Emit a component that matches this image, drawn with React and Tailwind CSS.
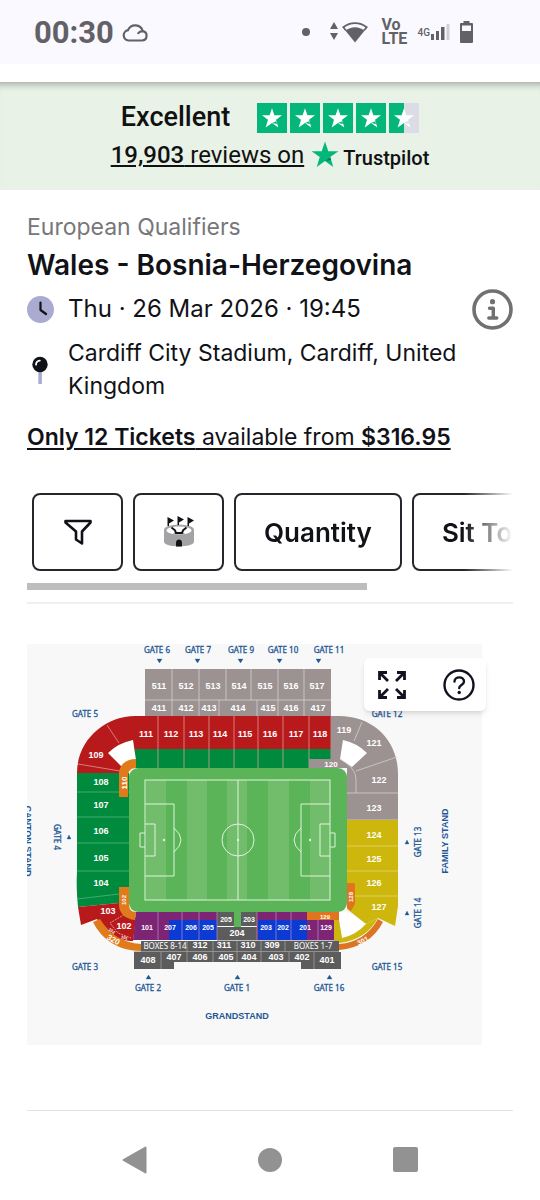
import React from 'react';

const starPath = 'M12 0.500l2.800 8.200h8.700l-7 5.100 2.600 8.400L12 17.100l-7.100 5.100 2.600-8.400-7-5.100h8.700z';

const topGates = [
  { name: 'GATE 6', x: 130, arrow: 132 },
  { name: 'GATE 7', x: 171, arrow: 170 },
  { name: 'GATE 9', x: 214, arrow: 213 },
  { name: 'GATE 10', x: 256, arrow: 252 },
  { name: 'GATE 11', x: 302, arrow: 291 },
];

const bottomGates = [
  { name: 'GATE 2', x: 121 },
  { name: 'GATE 1', x: 210 },
  { name: 'GATE 16', x: 302 },
];

const sections = [
  ['511', 132, 45], ['512', 159, 45], ['513', 186, 45], ['514', 212, 45], ['515', 238, 45], ['516', 264, 45], ['517', 290, 45],
  ['411', 132, 67], ['412', 159, 67], ['413', 182, 67], ['414', 211, 67], ['415', 241, 67], ['416', 264, 67], ['417', 291, 67],
  ['111', 119, 93], ['112', 144, 93], ['113', 169, 93], ['114', 193, 93], ['115', 218, 93], ['116', 243, 93], ['117', 269, 93], ['118', 293, 93],
  ['109', 69, 114], ['108', 74, 141], ['107', 74, 164], ['106', 74, 190], ['105', 74, 217], ['104', 74, 242], ['103', 81, 270], ['102', 97, 285],
  ['119', 317, 89], ['121', 347, 102], ['122', 352, 139], ['123', 347, 167], ['124', 347, 194], ['125', 347, 218], ['126', 347, 242], ['127', 352, 266],
  ['204', 210, 292],
  ['312', 173, 304], ['311', 197, 304], ['310', 221, 304], ['309', 245, 304],
  ['408', 121, 319], ['407', 147, 316], ['406', 173, 316], ['405', 199, 316], ['404', 222, 316], ['403', 249, 316], ['402', 275, 316], ['401', 300, 319],
];

const smallSections = [
  ['101', 120, 286], ['207', 143, 286], ['206', 164, 286], ['205', 181, 286],
  ['205', 199, 278], ['203', 222, 278], ['203', 239, 286], ['202', 256, 286], ['201', 278, 286], ['129', 299, 286],
];

function StatusBar() {
  return (
    <div className="flex items-center justify-between h-16 pl-[34px] pr-[67px] bg-[#faf9ff] text-[#616166]">
      <div className="flex items-center gap-2">
        <span className="text-[31px] font-bold leading-none">00:30</span>
        <svg className="w-[26px] h-5" viewBox="0 0 26 20" fill="none" stroke="currentColor" strokeWidth="2.2" strokeLinecap="round">
          <path d="M6.500 18.500H20a4.700 4.700 0 0 0 .8-9.300A7.800 7.800 0 0 0 6 8.200a5.200 5.200 0 0 0 .5 10.300z" />
          <path d="M20.500 9.200c-2 .1-3.300.8-4.200 2" />
        </svg>
      </div>
      <div className="flex items-center">
        <span className="w-2 h-2 rounded-full bg-[#616166] mr-5" />
        <svg className="w-[38px] h-[22px] mr-3.5" viewBox="0 0 38 22" fill="currentColor">
          <path d="M4 1l4 7H0zM4 19l4-7H0z" />
          <path d="M25 21.500L15.500 9.800a14.500 14.500 0 0 1 19 0z" />
          <path d="M16 9.500l-2.700-3.300a18.500 18.500 0 0 1 23.400 0L34 9.500" fill="none" stroke="currentColor" strokeWidth="1.800" />
        </svg>
        <span className="flex flex-col w-7 text-base font-bold leading-[14px]">
          <span>Vo</span>
          <span>LTE</span>
        </span>
        <span className="ml-2 text-[10px] font-medium">4G</span>
        <svg className="w-[19px] h-[18px] ml-px mr-2.5" viewBox="0 0 19 18" fill="currentColor">
          <path d="M0 11h3v6H0zM5 8h3v9H5zM10 4h3.500v13H10z" />
          <path d="M15.500 1h3v16h-3z" fill="#d0d0d4" />
        </svg>
        <svg className="w-[13px] h-[22px]" viewBox="0 0 13 22" fill="currentColor">
          <path fillRule="evenodd" d="M3.500 0h6v2H12a1 1 0 0 1 1 1v18a1 1 0 0 1-1 1H1a1 1 0 0 1-1-1V3a1 1 0 0 1 1-1h2.500zM2 4.500V10h9V4.500z" />
        </svg>
      </div>
    </div>
  );
}

function RatingStar({ half }) {
  return (
    <svg className="w-[30px] h-[30px]" viewBox="0 0 30 30">
      <path d="M0 0h30v30H0z" fill={half ? '#dcdce6' : '#04b67a'} />
      {half && <path d="M0 0h15v30H0z" fill="#04b67a" />}
      <path d="M15 5.200l2.400 7.100H25l-6 4.500 2.300 7.700L15 19.900l-6.300 4.600L11 16.800l-6-4.500h7.600z" fill="#fff" />
      <path d="M15 19.900l4.300-1.600.8 2.600z" fill={half ? '#dcdce6' : '#04b67a'} />
    </svg>
  );
}

function TrustBanner() {
  return (
    <section className="flex flex-col items-center h-[108px] pt-5 bg-[#e8f2e7] text-[#111] shadow-[inset_0_9px_9px_-8px_rgba(0,0,0,0.4)]">
      <div className="flex items-center gap-[27px] h-[31px]">
        <span className="text-[27px] font-medium leading-none">Excellent</span>
        <div className="flex gap-[3px]">
          <RatingStar />
          <RatingStar />
          <RatingStar />
          <RatingStar />
          <RatingStar half />
        </div>
      </div>
      <a href="#reviews" className="flex items-center mt-1.5 h-8">
        <span className="text-2xl leading-8 underline decoration-2 underline-offset-2"><span className="font-medium">19,903</span> reviews on</span>
        <svg className="w-7 h-7 ml-[7px] mr-1" viewBox="0 0 24 24">
          <path d={starPath} fill="#04b67a" />
          <path d="M12 17.100l4.500-3 .7 2.200z" fill="#0a7c54" />
        </svg>
        <span className="pt-1.5 text-xl font-medium leading-none">Trustpilot</span>
      </a>
    </section>
  );
}

function EventInfo() {
  return (
    <section className="font-[Inter,sans-serif] text-[#111217]">
      <p className="text-[23px] leading-8 text-[#77777a]">European Qualifiers</p>
      <h1 className="text-[28px] leading-[44px] font-semibold">Wales - Bosnia-Herzegovina</h1>
      <div className="flex items-center h-11">
        <svg className="w-[27px] h-[27px] mr-3.5" viewBox="0 0 27 27" fill="none">
          <circle cx="13.500" cy="13.500" r="13.500" fill="#a9abd0" />
          <path d="M13.500 6.500v7.500l5.500 4" stroke="#111217" strokeWidth="2.200" strokeLinecap="round" strokeLinejoin="round" />
        </svg>
        <p className="text-2xl flex-1">Thu · 26 Mar 2026 · 19:45</p>
        <button aria-label="Event information">
          <svg className="w-[41px] h-[41px]" viewBox="0 0 41 41" fill="none" stroke="#717174">
            <circle cx="20.500" cy="20.500" r="18.500" strokeWidth="3.600" />
            <circle cx="20.500" cy="12.700" r="2.600" fill="#717174" stroke="none" />
            <path d="M17.500 19.200h3.800v9.300M16.800 29h8" strokeWidth="3.400" strokeLinecap="round" strokeLinejoin="round" />
          </svg>
        </button>
      </div>
      <div className="flex items-center mt-1.5">
        <svg className="w-[27px] h-[29px] mr-3.5 shrink-0" viewBox="0 0 27 29">
          <path d="M11.300 14h3.600v14h-3.600z" fill="#a9abd0" />
          <circle cx="13" cy="8.500" r="7.700" fill="#111217" />
          <path d="M9 8.600A4.200 4.200 0 0 1 12.800 4.600" fill="none" stroke="#fff" strokeWidth="1.800" strokeLinecap="round" />
        </svg>
        <p className="text-[23px] leading-[33px]">Cardiff City Stadium, Cardiff, United Kingdom</p>
      </div>
      <a href="#tickets" className="block mt-4 text-[23px] leading-9 underline decoration-2 underline-offset-3">
        <b className="font-semibold">Only 12 Tickets</b> available from <b className="font-semibold">$316.95</b>
      </a>
    </section>
  );
}

function Filters() {
  return (
    <section className="mt-[38px] font-[Inter,sans-serif] text-[#111217]">
      <div className="flex gap-2.5 pl-[5px] overflow-hidden mask-r-from-90% mask-r-to-100%">
        <button aria-label="Filters" className="flex items-center justify-center shrink-0 w-[91px] h-[78px] border-2 border-[#26272c] rounded-lg">
          <svg className="w-7 h-[26px]" viewBox="0 0 28 26" fill="none" stroke="currentColor" strokeWidth="2.600" strokeLinejoin="round">
            <path d="M1.500 2h25v1.500l-8.500 9V24.500l-6-4v-8l-10.500-9z" />
          </svg>
        </button>
        <button aria-label="Stadium view" className="flex items-center justify-center shrink-0 w-[91px] h-[78px] border-2 border-[#26272c] rounded-lg">
          <svg className="w-8 h-8" viewBox="0 0 32 32">
            <path d="M1 14v11.500c0 6.500 30 6.500 30 0V14z" fill="#a3a3a5" />
            <ellipse cx="16" cy="14" rx="15" ry="5.500" fill="#a3a3a5" />
            <ellipse cx="16" cy="14.500" rx="12.500" ry="4" fill="#fff" />
            <path d="M9 18.500l3-2h8l3 2z" fill="#a3a3a5" />
            <path d="M8.500 11.500l3.500 2.800 1 2.700h6l1-2.700 3.500-2.800" fill="none" stroke="#111217" strokeWidth="2" />
            <path d="M13 30.500v-4c0-4 6-4 6 0v4z" fill="#111217" />
            <path d="M4.500 1l6.500 3.500-5 3V10H4.500zM14.500 0L21 3.500l-5 3V9h-1.500zM24.500 1L31 4.500l-5 3V10h-1.500z" fill="#111217" />
          </svg>
        </button>
        <button className="shrink-0 h-[78px] px-7 border-2 border-[#26272c] rounded-lg text-[26px] font-semibold">Quantity</button>
        <button className="shrink-0 h-[78px] px-7 border-2 border-[#26272c] rounded-lg text-[26px] font-semibold">Sit Together</button>
      </div>
      <div className="w-[70%] h-[7px] mt-3 bg-[#bdbdbd]" />
    </section>
  );
}

function StadiumMap() {
  return (
    <svg className="w-full h-auto bg-[#f8f8f8]" viewBox="0 0 455 401" role="img" aria-label="Stadium seating map">
      {/* upper tiers */}
      <path d="M118 25h186v47H118z" fill="#9c9292" />
      <path d="M118 56h186M145 25v47M172 25v47M199 25v31M224 25v31M192 56v16M230 56v16M251 25v47M277 25v47" stroke="#d5cfcf" strokeWidth="0.800" fill="none" />

      {/* north side */}
      <path d="M304 72H108C78 72 50 96 50 129l45 1 14-14V105h195z" fill="#b81a1c" />
      <path d="M108 105h196v10h-22v9H108z" fill="#008a3e" />
      <path d="M131 72v52M157 72v52M182 72v52M207 72v52M231 72v52M256 72v52M282 72v52M304 72v43M80 81l12 18M51 120l42 7" stroke="#e3a9a5" strokeWidth="0.700" />
      <path d="M106 96l3 20-14 7-14-14q10-10 25-13z" fill="#fff" />

      {/* canton stand */}
      <path d="M50 129h52v115l-10 15-41 4q-2-20-1-35z" fill="#008a3e" />
      <path d="M50 148h52M50 173h52M50 199h52M50 227h52M50 255l42-5" stroke="#5fb783" strokeWidth="0.700" />
      <path d="M92 153v-23c0-10 8-15 17-15v9c-5 0-8 3-8 8v21z" fill="#e07b1c" />
      <path d="M51 263l41-4 17 15-3 23c-16 0-29-10-36-22l-16 6z" fill="#b81a1c" />
      <path d="M100 269l-17 10 8 10 13 5" fill="none" stroke="#efb5b1" strokeWidth="0.800" strokeDasharray="2 1" />
      <path d="M92 243h10v17c0 5 2 8 7 8l-1 8c-10-1-16-7-16-15z" fill="#e07b1c" />
      <path d="M66 278l7-3c9 15 23 24 41 25v7c-22 0-39-11-48-29z" fill="#e07b1c" />

      {/* family stand */}
      <path d="M304 72h8c34 0 59 24 59 58v46h-51v-52h-38v-9h22z" fill="#9c9292" />
      <path d="M316 96l-3 19 12 8 15-14q-10-10-24-13z" fill="#fff" />
      <path d="M335 78l-8 19M370 113l-41 14M329 149v-14q0-11-16-20M320 149h51M320 176h51" stroke="#d5cfcf" strokeWidth="0.800" fill="none" />
      <path d="M320 176h51v86l-3 20-17-8-12 6-19-15z" fill="#cdb70c" />
      <path d="M320 202h51M320 227h51M328 252h43" stroke="#e6db85" strokeWidth="0.700" />
      <path d="M320 239h6q2 0 2 2v19l-4 7-4-3z" fill="#e2741f" />
      <path d="M311 268h9l19 12q-10 12-24 14z" fill="#fff" />
      <path d="M307 276h5l3 18q14-3 24-14l12-6q-12 22-39 25l-5-2z" fill="#cdb70c" />
      <path d="M351 275l5 3q-13 25-44 28v-6q26-2 39-25z" fill="#dc7423" />

      {/* pitch */}
      <rect x="102" y="124" width="218" height="144" rx="9" fill="#5bb458" />
      <path d="M207 266h7v18h-7z" fill="#5bb458" />
      <path d="M119 136h20v120h-20zM160 136h20v120h-20zM200 136h20v120h-20zM241 136h21v120h-21zM283 136h20v120h-20z" fill="#72bd6b" />
      <g fill="none" stroke="#dff3dc">
        <rect x="118" y="136" width="185" height="120" />
        <path d="M211 136v120M118 160h29v72h-29M118 180h10v32h-10M118 189h-5v14h5M303 160h-29v72h29M303 180h-10v32h10M303 189h5v14h-5" />
        <path d="M147 184q14 12 0 24M274 184q-14 12 0 24" />
        <circle cx="211" cy="196" r="16" />
      </g>
      <g fill="#dff3dc">
        <circle cx="137" cy="196" r="1.200" />
        <circle cx="211" cy="196" r="1.200" />
        <circle cx="283" cy="196" r="1.200" />
      </g>

      {/* grandstand */}
      <path d="M109 268h81v28h-84zM230 268h77v28h-77z" fill="#7d2574" />
      <path d="M142 276h48v20h-48zM231 276h49v20h-49z" fill="#0b3bd2" />
      <path d="M280 268h32v8h-32z" fill="#e2741f" />
      <path d="M190 268h17v14h-17zM214 268h16v14h-16zM190 283h40v13h-40z" fill="#5c5c5c" />
      <path d="M131 268v28M155 268v28M172 268v28M249 268v28M264 268v28M291 276v20M190 268v28M230 268v28" stroke="#b58bc4" strokeWidth="0.700" />
      <path d="M114 297h198v11h2v17h-40v-7H147v7h-40v-17h7z" fill="#5c5c5c" />
      <path d="M107 307.500h205M160 297v21M186 297v21M210 297v21M234 297v21M258 297v11M262 308v10M134 308v17M287 308v17M190 296.500h122" stroke="#a8a8a8" strokeWidth="0.700" />

      <g fill="#fff" textAnchor="middle" fontFamily="Liberation Sans, sans-serif" fontWeight="bold">
        <g fontSize="9">
          {sections.map(([name, x, y]) => (
            <text key={name} x={x} y={y}>{name}</text>
          ))}
        </g>
        <g fontSize="7">
          {smallSections.map(([name, x, y], index) => (
            <text key={index} x={x} y={y}>{name}</text>
          ))}
          <text x="304" y="123" fontSize="8">120</text>
          <text x="298" y="275" fontSize="6">129</text>
          <text transform="translate(100 139) rotate(-90)" fontSize="8">110</text>
          <text transform="translate(99 256) rotate(-90)" fontSize="6">102</text>
          <text transform="translate(326 253) rotate(-90)" fontSize="6">128</text>
          <text transform="translate(85 298) rotate(30)" fontSize="8">320</text>
          <text transform="translate(337 299) rotate(-28)">301</text>
          <text transform="translate(84 288) rotate(35)" fontSize="4">102</text>
          <text transform="translate(97 295) rotate(15)" fontSize="4">101</text>
        </g>
      </g>
      <g fill="#fff" textAnchor="middle" fontFamily="Noto Sans, sans-serif" fontSize="8">
        <text x="138" y="305">BOXES 8-14</text>
        <text x="286" y="305">BOXES 1-7</text>
      </g>

      <g fill="#1c5796" stroke="#1c5796" strokeWidth="0.300" textAnchor="middle" fontFamily="Noto Sans, sans-serif" fontSize="8">
        {topGates.map((gate) => (
          <g key={gate.name}>
            <text x={gate.x} y="9">{gate.name}</text>
            <path d={`M${gate.arrow - 2} 15h5l-2.500 4z`} />
          </g>
        ))}
        {bottomGates.map((gate) => (
          <g key={gate.name}>
            <text x={gate.x} y="347">{gate.name}</text>
            <path d={`M${gate.x - 2} 335h5l-2.500-4z`} />
          </g>
        ))}
        <text x="58" y="73">GATE 5</text>
        <text x="360" y="73">GATE 12</text>
        <text x="58" y="326">GATE 3</text>
        <text x="360" y="326">GATE 15</text>
        <text transform="translate(27 193) rotate(90)">GATE 4</text>
        <text transform="translate(394 198) rotate(-90)">GATE 13</text>
        <text transform="translate(394 269) rotate(-90)">GATE 14</text>
        <path d="M40 195h4l-2-4zM378 200h4l-2-4zM378 271h4l-2-4z" />
      </g>
      <g fill="#1c5796" textAnchor="middle" fontFamily="Liberation Sans, sans-serif" fontWeight="bold" fontSize="9">
        <text x="210" y="375">GRANDSTAND</text>
        <text transform="translate(421 197) rotate(-90)">FAMILY STAND</text>
        <text transform="translate(-2 197) rotate(90)">CANTON STAND</text>
      </g>
    </svg>
  );
}

function MapTools() {
  return (
    <div className="absolute top-3.5 -right-1 flex items-center justify-between w-[122px] h-[53px] pl-[13px] pr-[11px] bg-white rounded-md shadow-md text-[#10121f]">
      <button aria-label="Full screen">
        <svg className="w-[30px] h-[30px]" viewBox="0 0 30 30" fill="none" stroke="currentColor" strokeWidth="2.800">
          <path d="M2.500 10V2.500H10M3 3l8 8M20 2.500h7.500V10M27 3l-8 8M2.500 20v7.500H10M3 27l8-8M20 27.500h7.500V20M27 27l-8-8" />
        </svg>
      </button>
      <button aria-label="Help">
        <svg className="w-8 h-8" viewBox="0 0 32 32" fill="none" stroke="currentColor" strokeWidth="2.400" strokeLinecap="round">
          <circle cx="16" cy="16" r="14.500" />
          <path d="M11.500 12.500c0-5.500 9.500-5.500 9.500 0 0 3.500-4.800 3.300-4.800 6.500" />
          <circle cx="16.200" cy="23.500" r="1.700" fill="currentColor" stroke="none" />
        </svg>
      </button>
    </div>
  );
}

function NavBar() {
  return (
    <nav className="flex items-center justify-between h-[89px] px-[122px] pt-2 text-[#929292]">
      <button aria-label="Back">
        <svg className="w-[25px] h-7" viewBox="0 0 25 28" fill="currentColor" stroke="currentColor" strokeWidth="2" strokeLinejoin="round">
          <path d="M1.500 14L23.500 1.500v25z" />
        </svg>
      </button>
      <button aria-label="Home" className="w-6 h-6 rounded-full bg-[#929292]" />
      <button aria-label="Recent apps" className="w-[25px] h-[25px] rounded-xs bg-[#929292]" />
    </nav>
  );
}

export default function App() {
  return (
    <div className="min-h-screen bg-white font-[Roboto,sans-serif]">
      <StatusBar />
      <div className="h-[18px] bg-white" />
      <TrustBanner />
      <main className="px-[27px] pt-[21px]">
        <EventInfo />
        <Filters />
        <hr className="mt-3 border-t-2 border-[#efefef]" />
        <div className="relative mt-10 mr-[31px]">
          <StadiumMap />
          <MapTools />
        </div>
        <hr className="mt-[65px] border-[#e2e2e2]" />
      </main>
      <NavBar />
    </div>
  );
}
